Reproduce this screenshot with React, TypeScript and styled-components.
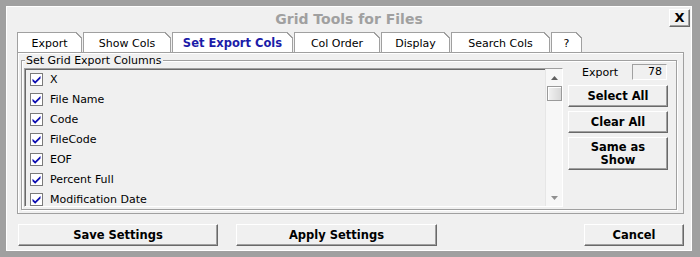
import React from "react";
import styled, { createGlobalStyle } from "styled-components";

const Global = createGlobalStyle`
  html, body { margin: 0; padding: 0; background: #a0a0a0; }
  body { font-family: "DejaVu Sans", Verdana, sans-serif; font-size: 11px; color: #000; }
  * { box-sizing: border-box; }
`;

const Frame = styled.div`
  width: 700px;
  height: 257px;
  padding: 6px 8px 6px 6px;
  background: #a0a0a0;
  display: flex;
`;

const Dialog = styled.div`
  flex: 1;
  display: flex;
  flex-direction: column;
  background: #f0f0f0;
  border: 1px solid #ffffff;
`;

const TitleBar = styled.div`
  height: 25px;
  display: grid;
  grid-template-columns: 1fr auto 1fr;
  align-items: start;
`;

const Title = styled.div`
  grid-column: 2;
  line-height: 25px;
  font-size: 14px;
  font-weight: bold;
  color: #a0a0a0;
`;

const CloseButton = styled.button`
  grid-column: 3;
  justify-self: end;
  margin: 2px 1px 0 0;
  width: 21px;
  height: 18px;
  padding: 0;
  background: #f0f0f0;
  border: 1px solid;
  border-color: #ffffff #696969 #696969 #ffffff;
  box-shadow: inset -1px -1px #a0a0a0;
  font-family: "DejaVu Sans", Verdana, sans-serif;
  font-weight: bold;
  font-size: 13px;
  line-height: 14px;
  color: #000;
`;

const TabRow = styled.div`
  display: flex;
  gap: 1px;
  margin-left: 10px;
  height: 20px;
`;

const Tab = styled.div<{ $w: number; $active?: boolean }>`
  position: relative;
  width: ${(p) => p.$w}px;
  height: 20px;
  border: 1px solid #a0a0a0;
  border-bottom: none;
  background: #ffffff;
  text-align: center;
  padding-top: 4px;
  line-height: 13px;
  font-weight: ${(p) => (p.$active ? "bold" : "normal")};
  color: ${(p) => (p.$active ? "#1c1ca8" : "#000")};
  font-size: ${(p) => (p.$active ? "11.5px" : "11px")};
  &::after {
    content: "";
    position: absolute;
    top: -1px;
    right: -1px;
    width: 6px;
    height: 6px;
    background: linear-gradient(
      to bottom left,
      #f0f0f0 0 46%,
      #a0a0a0 46% 60%,
      transparent 60%
    );
  }
`;

const Panel = styled.div`
  margin-left: 10px;
  width: 667px;
  height: 162px;
  border: 1px solid #a0a0a0;
  box-shadow: inset 1px 1px #ffffff;
  padding: 7px 6px 3px 3px;
  display: flex;
`;

const GroupBox = styled.div`
  position: relative;
  flex: 1;
  border: 1px solid #a0a0a0;
  box-shadow: inset 1px 1px #ffffff, 1px 1px #ffffff;
  padding: 3px 8px 2px 2px;
  display: flex;
  gap: 5px;
`;

const Legend = styled.div`
  position: absolute;
  top: -7px;
  left: 3px;
  padding: 0 1px;
  line-height: 13px;
  background: #f0f0f0;
`;

const ListBox = styled.div`
  flex: 1;
  margin-top: 4px;
  display: flex;
  border: 1px solid;
  border-color: #a0a0a0 #ffffff #ffffff #a0a0a0;
  box-shadow: inset 1px 1px #696969;
  overflow: hidden;
`;

const Items = styled.div`
  flex: 1;
  overflow: hidden;
  padding-left: 1px;
`;

const Row = styled.div`
  height: 20px;
  display: flex;
  align-items: center;
  gap: 7px;
  padding-left: 4px;
`;

const Box = styled.span`
  width: 13px;
  height: 13px;
  border: 1px solid #7a7a7a;
  background: #ffffff;
  display: flex;
  align-items: center;
  justify-content: center;
`;

const ScrollBar = styled.div`
  width: 17px;
  background: #f7f7f7;
  border-left: 1px solid #e6e6e6;
  display: flex;
  flex-direction: column;
  align-items: center;
`;

const Arrow = styled.div`
  height: 17px;
  width: 100%;
  display: flex;
  align-items: center;
  justify-content: center;
`;

const Thumb = styled.div`
  width: 15px;
  height: 15px;
  border: 1px solid #9a9a9a;
  background: linear-gradient(to right, #f2f2f2, #d8d8d8);
  box-shadow: inset 1px 1px #ffffff;
`;

const Track = styled.div`
  flex: 1;
`;

const Side = styled.div`
  width: 100px;
  display: flex;
  flex-direction: column;
  gap: 4px;
`;

const CountRow = styled.div`
  height: 16px;
  margin-bottom: 1px;
  display: flex;
  align-items: center;
  justify-content: flex-end;
  gap: 14px;
`;

const CountBox = styled.div`
  width: 35px;
  height: 16px;
  margin-right: 1px;
  border: 1px solid;
  border-color: #a0a0a0 #ffffff #ffffff #a0a0a0;
  text-align: right;
  padding-right: 4px;
  line-height: 14px;
`;

const Button = styled.button<{ $h?: number; $w?: number }>`
  width: ${(p) => (p.$w ? `${p.$w}px` : "100%")};
  height: ${(p) => p.$h ?? 22}px;
  padding: 0;
  background: #f0f0f0;
  border: 1px solid;
  border-color: #ffffff #696969 #696969 #ffffff;
  box-shadow: inset -1px -1px #a0a0a0;
  font-family: "DejaVu Sans", Verdana, sans-serif;
  font-weight: bold;
  font-size: 11.5px;
  line-height: 13px;
  color: #000;
`;

const BottomBar = styled.div`
  margin-top: 10px;
  padding: 0 7px 0 11px;
  display: flex;
  gap: 18px;
`;

const Spacer = styled.div`
  flex: 1;
`;

const Check = () => (
  <svg width="9" height="9" viewBox="0 0 9 9">
    <path d="M0.5 3.8 L3.2 6.3 L8.5 1 L8.5 3.6 L3.2 8.8 L0.5 6.2 Z" fill="#0c0cb0" />
  </svg>
);

const Up = () => (
  <svg width="7" height="4" viewBox="0 0 7 4">
    <path d="M0 4 L3.5 0 L7 4 Z" fill="#606060" />
  </svg>
);

const Down = () => (
  <svg width="7" height="4" viewBox="0 0 7 4">
    <path d="M0 0 L3.5 4 L7 0 Z" fill="#909090" />
  </svg>
);

const tabs: { label: string; w: number; active?: boolean }[] = [
  { label: "Export", w: 65 },
  { label: "Show Cols", w: 88 },
  { label: "Set Export Cols", w: 121, active: true },
  { label: "Col Order", w: 86 },
  { label: "Display", w: 69 },
  { label: "Search Cols", w: 99 },
  { label: "?", w: 31 },
];

const columns = [
  "X",
  "File Name",
  "Code",
  "FileCode",
  "EOF",
  "Percent Full",
  "Modification Date",
];

export default function App() {
  return (
    <>
      <Global />
      <Frame>
        <Dialog>
          <TitleBar>
            <Title>Grid Tools for Files</Title>
            <CloseButton>X</CloseButton>
          </TitleBar>
          <TabRow>
            {tabs.map((t) => (
              <Tab key={t.label} $w={t.w} $active={t.active}>
                {t.label}
              </Tab>
            ))}
          </TabRow>
          <Panel>
            <GroupBox>
              <Legend>Set Grid Export Columns</Legend>
              <ListBox>
                <Items>
                  {columns.map((c) => (
                    <Row key={c}>
                      <Box>
                        <Check />
                      </Box>
                      <span>{c}</span>
                    </Row>
                  ))}
                </Items>
                <ScrollBar>
                  <Arrow>
                    <Up />
                  </Arrow>
                  <Thumb />
                  <Track />
                  <Arrow>
                    <Down />
                  </Arrow>
                </ScrollBar>
              </ListBox>
              <Side>
                <CountRow>
                  <span>Export</span>
                  <CountBox>78</CountBox>
                </CountRow>
                <Button>Select All</Button>
                <Button>Clear All</Button>
                <Button $h={33}>
                  Same as
                  <br />
                  Show
                </Button>
              </Side>
            </GroupBox>
          </Panel>
          <BottomBar>
            <Button $w={200}>Save Settings</Button>
            <Button $w={201}>Apply Settings</Button>
            <Spacer />
            <Button $w={100}>Cancel</Button>
          </BottomBar>
        </Dialog>
      </Frame>
    </>
  );
}
